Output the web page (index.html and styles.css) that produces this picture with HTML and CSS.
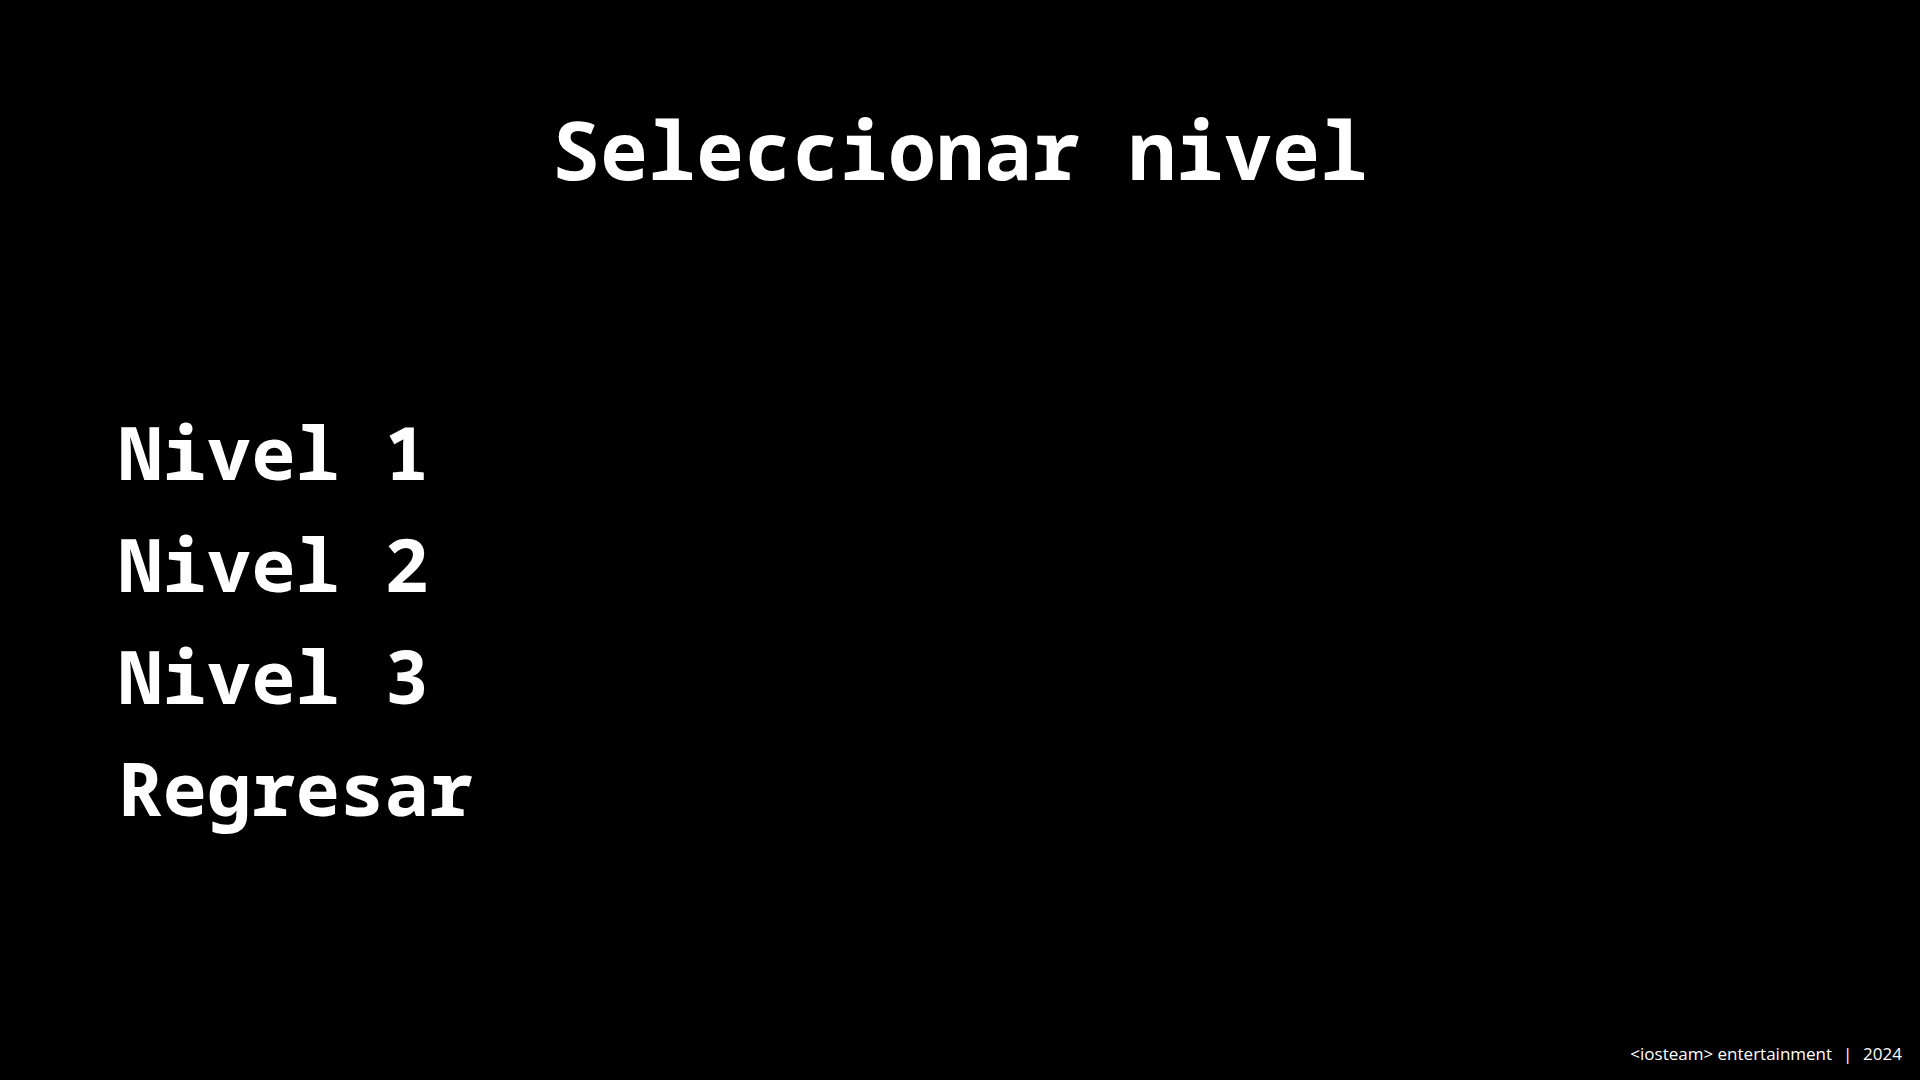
FILE: index.html
```html
<!DOCTYPE html>
<html lang="es">
<head>
<meta charset="utf-8">
<title>Seleccionar nivel</title>
<link rel="stylesheet" href="styles.css">
</head>
<body>
<div class="screen">
  <h1 class="title">Seleccionar nivel</h1>
  <ul class="menu">
    <li class="menu-item">Nivel 1</li>
    <li class="menu-item">Nivel 2</li>
    <li class="menu-item">Nivel 3</li>
    <li class="menu-item">Regresar</li>
  </ul>
  <footer class="footer">&lt;iosteam&gt; entertainment &nbsp;<span class="sep">|</span>&nbsp; 2024</footer>
</div>
</body>
</html>
```

FILE: styles.css
```css
html, body {
  margin: 0;
  padding: 0;
  background: #000;
  color: #fff;
}

.screen {
  height: 100vh;
  display: flex;
  flex-direction: column;
  box-sizing: border-box;
}

.title {
  margin: 0;
  padding-top: 109px;
  font-family: "Noto Sans Mono", "DejaVu Sans Mono", monospace;
  font-weight: 700;
  font-size: 80px;
  line-height: 80px;
  text-align: center;
}

.menu {
  list-style: none;
  margin: 207px 0 0 0;
  padding: 0 0 0 118px;
  font-family: "Noto Sans Mono", "DejaVu Sans Mono", monospace;
  font-weight: 700;
  font-size: 74px;
  line-height: 112px;
}

.menu-item {
  margin: 0;
}

.footer {
  margin-top: auto;
  padding: 0 18px 15px 0;
  text-align: right;
  font-family: "Open Sans", sans-serif;
  font-size: 17px;
  line-height: 23px;
}

.sep {
  margin: 0 2px;
}
```
